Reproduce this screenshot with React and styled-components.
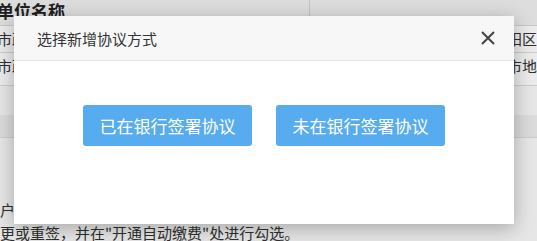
import React from "react";
import styled, { createGlobalStyle } from "styled-components";

const GlobalStyle = createGlobalStyle`
  html, body {
    margin: 0;
    padding: 0;
    background: #ffffff;
    overflow: hidden;
  }
  body {
    font-family: "Noto Sans CJK SC", "Liberation Sans", sans-serif;
    color: #333;
  }
`;

const Page = styled.div`
  width: 537px;
  height: 241px;
  position: relative;
  overflow: hidden;
  background: #fafafa;
`;

const Table = styled.div`
  display: grid;
  grid-template-columns: 310px 1fr;
`;

const HeadCell = styled.div`
  height: 25px;
  line-height: 22px;
  background: #f0f0f0;
  font-size: 17px;
  font-weight: 700;
  color: #222;
  text-indent: -3px;
  border-right: ${(p) => (p.$divider ? "1px solid #d6d6d6" : "none")};
  border-bottom: 1px solid #d8d8d8;
  white-space: nowrap;
  overflow: hidden;
`;

const Cell = styled.div`
  height: ${(p) => p.$h || 26}px;
  line-height: 26px;
  font-size: 15px;
  color: #333;
  background: #fff;
  border-bottom: 1px solid #ddd;
  white-space: nowrap;
  overflow: hidden;
  text-indent: ${(p) => (p.$align === "right" ? "0" : "-3px")};
  text-align: ${(p) => (p.$align || "left")};
  direction: ${(p) => (p.$align === "right" ? "rtl" : "ltr")};
`;

const Band = styled.div`
  height: ${(p) => p.$h}px;
  background: ${(p) => p.$bg};
  border-bottom: ${(p) => (p.$line ? "1px solid #dedede" : "none")};
`;

const Notes = styled.div`
  padding-top: 60px;
  font-size: 15px;
  line-height: 23px;
  color: #333;
  white-space: nowrap;
`;

const Overlay = styled.div`
  position: absolute;
  inset: 0;
  background: rgba(0, 0, 0, 0.08);
`;

const Modal = styled.div`
  position: absolute;
  left: 14px;
  top: 16px;
  width: 500px;
  height: 208px;
  background: #fff;
  box-shadow: 0 4px 18px rgba(0, 0, 0, 0.28);
  display: flex;
  flex-direction: column;
`;

const Header = styled.div`
  height: 44px;
  flex: none;
  background: #f7f7f7;
  border-bottom: 1px solid #e6e6e6;
  display: flex;
  align-items: center;
  justify-content: space-between;
  padding: 0 18px 0 23px;
`;

const Title = styled.div`
  font-size: 15px;
  color: #333;
`;

const Close = styled.button`
  border: none;
  background: none;
  padding: 0;
  width: 16px;
  height: 16px;
  display: flex;
  align-items: center;
  justify-content: center;
  cursor: pointer;
`;

const Body = styled.div`
  flex: 1;
  display: flex;
  justify-content: center;
  align-items: flex-start;
  gap: 24px;
  padding-top: 44px;
`;

const ActionButton = styled.button`
  width: 169px;
  height: 41px;
  border: none;
  border-radius: 3px;
  background: #56acef;
  color: #fff;
  font-family: "Noto Sans CJK SC", "Liberation Sans", sans-serif;
  font-size: 17px;
  cursor: pointer;
`;

export default function App() {
  return (
    <>
      <GlobalStyle />
      <Page>
        <Table>
          <HeadCell $divider>单位名称</HeadCell>
          <HeadCell />
          <Cell>市政</Cell>
          <Cell $align="right">北京市朝阳区</Cell>
          <Cell $h={32}>市政</Cell>
          <Cell $h={32} $align="right">北京马市地</Cell>
        </Table>
        <Band $h={29} $bg="#fafafa" />
        <Band $h={22} $bg="#eeeeee" $line />
        <Notes>
          <div>户</div>
          <div>更或重签，并在"开通自动缴费"处进行勾选。</div>
        </Notes>
        <Overlay />
        <Modal>
          <Header>
            <Title>选择新增协议方式</Title>
            <Close aria-label="关闭">
              <svg width="14" height="14" viewBox="0 0 14 14">
                <path d="M1 1L13 13M13 1L1 13" stroke="#444" strokeWidth="2" />
              </svg>
            </Close>
          </Header>
          <Body>
            <ActionButton>已在银行签署协议</ActionButton>
            <ActionButton>未在银行签署协议</ActionButton>
          </Body>
        </Modal>
      </Page>
    </>
  );
}
